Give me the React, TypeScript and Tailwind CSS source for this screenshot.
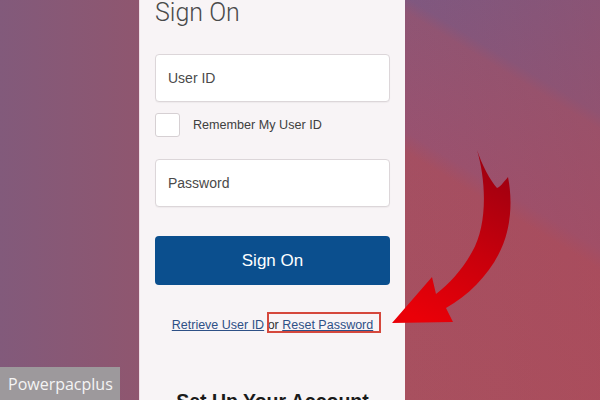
import React from "react";

export default function App() {
  return (
    <div className="relative flex h-[400px] w-[600px] overflow-hidden font-['Liberation_Sans',Arial,sans-serif]">
      <div className="h-full w-[139px] bg-[linear-gradient(90deg,#825a7b,#8f566f)]" />
      <div className="flex h-full w-[266px] flex-col border-l border-[#efdfe6] bg-[#f8f4f6]">
        <div className="flex flex-col pl-[15px] pr-[15px]">
          <div className="font-['Roboto',sans-serif] text-[25px] font-light leading-[25px] text-[#4a4a4a]">
            Sign On
          </div>
          <div className="mt-[29px] flex h-[48px] items-center rounded-[4px] border border-[#dcd6d9] bg-white pl-[12px] text-[14px] text-[#4a4a4a] shadow-[0_1px_1px_rgba(0,0,0,0.04)]">
            User ID
          </div>
          <div className="mt-[11px] flex h-[24px] items-center">
            <div className="h-[24px] w-[25px] rounded-[3px] border border-[#d6d0d3] bg-white" />
            <span className="ml-[13px] text-[12.6px] text-[#404040]">Remember My User ID</span>
          </div>
          <div className="mt-[22px] flex h-[48px] items-center rounded-[4px] border border-[#dcd6d9] bg-white pl-[12px] text-[14px] text-[#4a4a4a] shadow-[0_1px_1px_rgba(0,0,0,0.04)]">
            Password
          </div>
          <div className="mt-[29px] flex h-[49px] items-center justify-center rounded-[4px] bg-[#0b4f8e] text-[17px] text-white">
            Sign On
          </div>
          <div className="mt-[30px] h-[20px] text-center text-[12.5px] leading-[20px] text-[#333]">
            <span className="text-[#2e5086] underline">Retrieve User ID</span>
            <span> or </span>
            <span className="relative text-[#2e5086] underline">
              Reset Password
              <span className="absolute -left-[15px] -right-[8px] -top-[6px] -bottom-[1px] border-2 border-[#d5473c]" />
            </span>
          </div>
        </div>
        <div className="mt-[25px] h-px w-full bg-[#ebe3e7]" />
        <div className="mt-[29px] text-center text-[19.5px] font-bold leading-[24px] text-[#1a1a1a]">
          Set Up Your Account
        </div>
      </div>
      <div className="h-full flex-1 bg-[linear-gradient(90deg,rgba(160,80,106,0)_0%,rgba(178,72,84,0.35)_100%),linear-gradient(211deg,#765a86_0%,#7f5880_22%,#8f5574_25%,#985270_48%,#a44f62_52%,#a8505f_100%)]" />

      <svg className="absolute left-0 top-0" width="600" height="400" viewBox="0 0 600 400">
        <defs>
          <linearGradient id="arr" x1="500" y1="170" x2="420" y2="320" gradientUnits="userSpaceOnUse">
            <stop offset="0" stopColor="#a00010" />
            <stop offset="0.5" stopColor="#c8000c" />
            <stop offset="1" stopColor="#ea0008" />
          </linearGradient>
        </defs>
        <path
          d="M 477 150 C 486 180, 488 225, 472 252 C 462 270, 450 283, 436 294 L 432 277 L 392 323 L 453 322 L 446 308 C 475 292, 500 262, 507 232 C 512 212, 511 192, 508 177 C 503 183, 500 187, 497 188 C 490 180, 482 165, 477 150 Z"
          fill="url(#arr)"
        />
      </svg>

      <div className="absolute bottom-0 left-0 flex h-[33px] w-[120px] items-center bg-[#9d999c] pl-[8px] font-['Open_Sans',sans-serif] text-[16px] text-[#f4f4f4]">
        Powerpacplus
      </div>
    </div>
  );
}
